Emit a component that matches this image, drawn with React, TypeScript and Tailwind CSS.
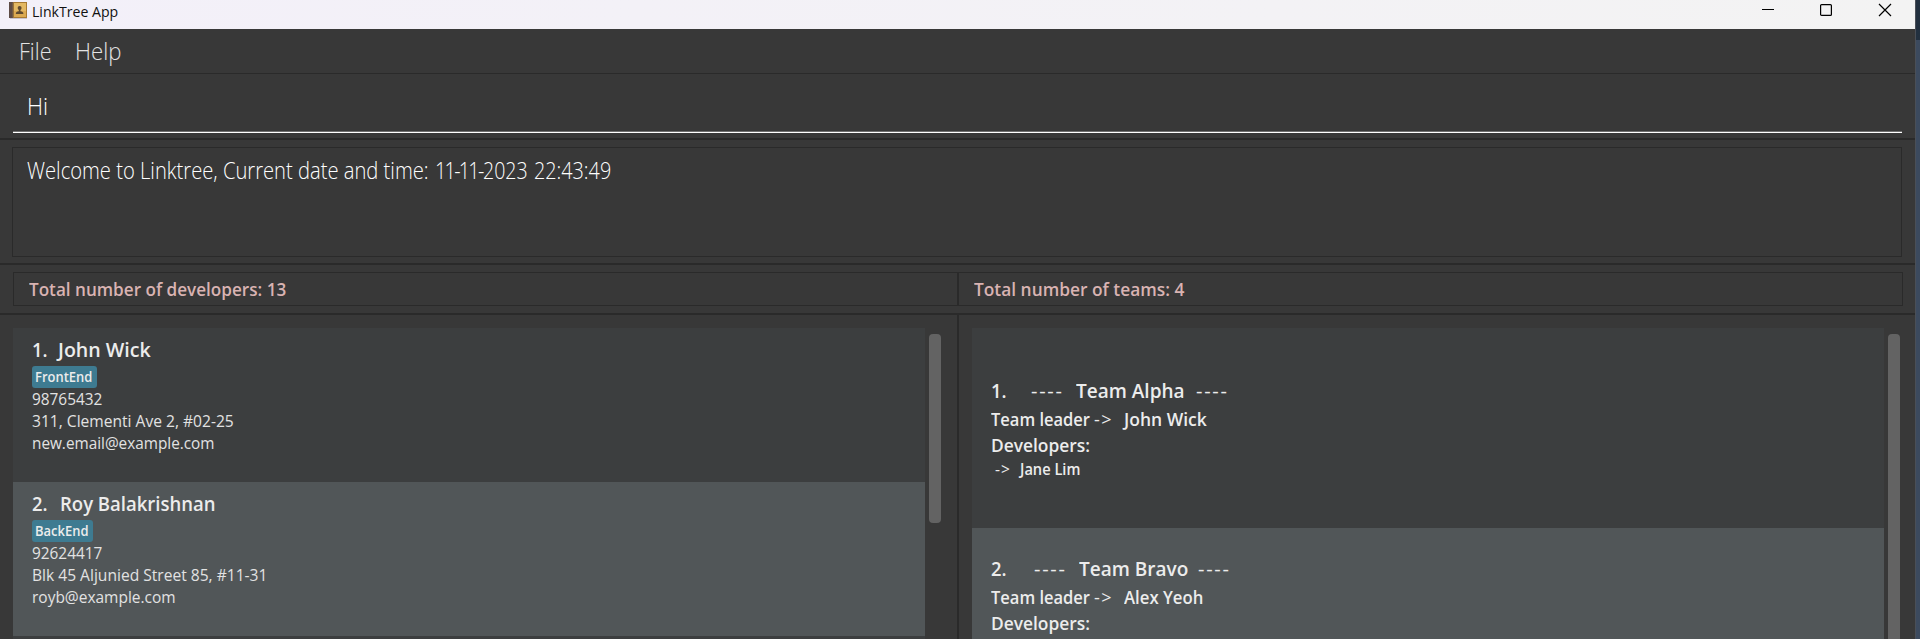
import React from "react";

type TextProps = { className: string; children: React.ReactNode };

function Text({ className, children }: TextProps) {
  return <span className={`block w-max shrink-0 origin-left whitespace-pre ${className}`}>{children}</span>;
}

function AppIcon() {
  return (
    <svg width="18" height="17" viewBox="0 0 18 17">
      <rect x="0" y="0" width="18" height="16" fill="#a87a32" />
      <rect x="0" y="0" width="4" height="16" fill="#5d4b46" />
      <rect x="3.5" y="0.5" width="1" height="15" fill="#8a6a42" />
      <rect x="5" y="1" width="12" height="14" fill="#e3b863" />
      <rect x="5" y="9" width="12" height="6" fill="#dba951" />
      <circle cx="10.6" cy="6" r="2" fill="#5f4a30" />
      <path d="M9.8 7h1.7v2.200c1.900.3 2.900.9 2.900 2.800H6.800c0-1.900 1-2.500 3-2.800z" fill="#5f4a30" />
      <rect x="1" y="16" width="17" height="1" fill="#c9c4cf" />
    </svg>
  );
}

function TitleBar() {
  return (
    <header className="flex h-[29px] bg-linear-to-r from-[#f3f0f9] to-[#f3f3f3] pl-[9px]">
      <div className="pt-[2px]">
        <AppIcon />
      </div>
      <Text className="ml-[5px] h-[22px] scale-x-[.94] text-[15px] leading-[22px] text-[#111111]">LinkTree App</Text>
      <div className="ml-auto flex pr-[23px] pt-[3px] text-black">
        <svg width="14" height="14" viewBox="0 0 14 14" className="mr-[44px]">
          <path d="M1 6.500h12" stroke="currentColor" />
        </svg>
        <svg width="14" height="14" viewBox="0 0 14 14" fill="none" className="mr-[45px]">
          <rect x="1.600" y="1.600" width="10.800" height="10.800" rx="1" stroke="currentColor" strokeWidth="1.200" />
        </svg>
        <svg width="14" height="14" viewBox="0 0 14 14">
          <path d="M1 1l12 12M13 1L1 13" stroke="currentColor" strokeWidth="1.200" />
        </svg>
      </div>
    </header>
  );
}

type Developer = {
  index: string;
  name: string;
  nameScale: string;
  tag: string;
  tagBox: string;
  phone: string;
  address: string;
  email: string;
  emailScale: string;
  row: string;
  gap: string;
};

const developers: Developer[] = [
  {
    index: "1.",
    name: "John Wick",
    nameScale: "scale-x-[.98]",
    tag: "FrontEnd",
    tagBox: "w-[65px]",
    phone: "98765432",
    address: "311, Clementi Ave 2, #02-25",
    email: "new.email@example.com",
    emailScale: "scale-x-[.957]",
    row: "bg-[#3c3e3f]",
    gap: "w-[26px]",
  },
  {
    index: "2.",
    name: "Roy Balakrishnan",
    nameScale: "scale-x-[.926]",
    tag: "BackEnd",
    tagBox: "w-[61px]",
    phone: "92624417",
    address: "Blk 45 Aljunied Street 85, #11-31",
    email: "royb@example.com",
    emailScale: "scale-x-[.967]",
    row: "bg-[#515658]",
    gap: "w-[28px]",
  },
];

function DeveloperCell({ dev }: { dev: Developer }) {
  return (
    <li className={`h-[154px] shrink-0 pl-[19px] pt-[7px] text-[16px] leading-[22px] text-[#e2e2e2] ${dev.row}`}>
      <div className="flex h-[29px] text-[20px] font-semibold leading-[30px] text-[#ececec]">
        <div className={dev.gap}>
          <Text className="scale-x-[.92]">{dev.index}</Text>
        </div>
        <Text className={dev.nameScale}>{dev.name}</Text>
      </div>
      <div className={`mt-[2px] h-[22px] rounded-[3px] bg-[#3e7b91] pl-[3px] text-[14px] font-semibold leading-[22px] text-[#ececec] ${dev.tagBox}`}>
        <Text className="scale-x-[.926]">{dev.tag}</Text>
      </div>
      <Text className="scale-x-[.96]">{dev.phone}</Text>
      <Text className="scale-x-[.974]">{dev.address}</Text>
      <Text className={dev.emailScale}>{dev.email}</Text>
    </li>
  );
}

type Team = {
  index: string;
  name: string;
  leader: string;
  leaderScale: string;
  members: string[];
  row: string;
  lead: string;
  nameBox: string;
};

const teams: Team[] = [
  {
    index: "1.",
    name: "Team Alpha",
    leader: "John Wick",
    leaderScale: "scale-x-[.972]",
    members: ["Jane Lim"],
    row: "h-[200px] bg-[#3c3e3f] pt-[49px]",
    lead: "w-[40px]",
    nameBox: "w-[120px]",
  },
  {
    index: "2.",
    name: "Team Bravo",
    leader: "Alex Yeoh",
    leaderScale: "scale-x-[.93]",
    members: [],
    row: "h-[200px] bg-[#515658] pt-[27px]",
    lead: "w-[43px]",
    nameBox: "w-[119px]",
  },
];

function TeamCell({ team }: { team: Team }) {
  return (
    <li className={`shrink-0 pl-[19px] text-[18px] font-semibold leading-[26px] text-[#ececec] ${team.row}`}>
      <div className="flex h-[28px] text-[20px] leading-[28px]">
        <div className={team.lead}>
          <Text className="scale-x-[.92]">{team.index}</Text>
        </div>
        <div className="w-[45px]">
          <Text className="font-normal tracking-[1.700px]">----</Text>
        </div>
        <div className={team.nameBox}>
          <Text className="scale-x-[.95]">{team.name}</Text>
        </div>
        <Text className="font-normal tracking-[1.700px]">----</Text>
      </div>
      <div className="mt-px flex h-[26px]">
        <div className="w-[103px]">
          <Text className="scale-x-[.916]">Team leader</Text>
        </div>
        <div className="w-[30px]">
          <Text className="font-normal tracking-[1.500px]">{"->"}</Text>
        </div>
        <Text className={team.leaderScale}>{team.leader}</Text>
      </div>
      <Text className="scale-x-[.965]">Developers:</Text>
      {team.members.map((m) => (
        <div key={m} className="flex h-[22px] pl-[4px] text-[15.5px] leading-[23px]">
          <div className="w-[25px]">
            <Text className="font-normal tracking-[1px]">{"->"}</Text>
          </div>
          <Text className="scale-x-[.944]">{m}</Text>
        </div>
      ))}
    </li>
  );
}

export default function App() {
  return (
    <div className="flex h-[639px] w-[1920px] overflow-hidden bg-[#383838] font-['Open_Sans','Noto_Sans',sans-serif]">
      <div className="flex w-[1915px] flex-col">
        <TitleBar />
        <nav className="flex h-[45px] border-b border-[#2a2a2a] pl-[18.500px] text-[23px] font-light leading-[44px] text-[#e4e4e4]">
          <div className="w-[56px]">
            <Text className="scale-x-[.94]">File</Text>
          </div>
          <Text className="scale-x-[.965]">Help</Text>
        </nav>

        <section className="h-[64px] pl-[13px] pr-[13px] pt-[11px]">
          <div className="h-[47px] border-b border-[#707070] pl-[13.500px] text-[23px] font-light leading-[43px] text-white">
            <Text className="scale-x-[.97]">Hi</Text>
          </div>
          <div className="h-px bg-white" />
        </section>

        <section className="h-[125px] border-t-2 border-[#2a2a2a] px-[12px] pt-[7px]">
          <div className="flex h-[110px] w-[1890px] border border-[#2a2a2a] pl-[14px] pt-[2px] text-[23px] font-light leading-[40px] text-white">
            <div className="w-[408px]">
              <Text className="scale-x-[.877]">Welcome to Linktree, Current date and time: </Text>
            </div>
            <div className="w-[48px]">
              <Text className="scale-x-[.86] tracking-[-2px]">11-11-</Text>
            </div>
            <div className="w-[51px]">
              <Text className="scale-x-[.85]">2023 </Text>
            </div>
            <Text className="scale-x-[.86]">22:43:49</Text>
          </div>
        </section>

        <section className="h-[50px] border-t-2 border-[#2a2a2a] pl-[13px] pt-[7px]">
          <div className="flex h-[34px] w-[1890px] border border-[#2a2a2a] text-[18px] font-semibold leading-[32px] text-[#d9b3b2]">
            <div className="w-[945px] border-r-2 border-[#2a2a2a] pl-[15px]">
              <Text className="scale-x-[.951]">Total number of developers: 13</Text>
            </div>
            <div className="pl-[15px]">
              <Text className="scale-x-[.963]">Total number of teams: 4</Text>
            </div>
          </div>
        </section>

        <main className="flex min-h-0 flex-1 border-t-2 border-[#2a2a2a]">
          <section className="flex w-[959px] border-r-2 border-[#2a2a2a] pl-[13px] pt-[13px]">
            <ul className="flex w-[912px] flex-col overflow-hidden">
              {developers.map((d) => (
                <DeveloperCell key={d.name} dev={d} />
              ))}
              <li className="h-[154px] shrink-0 bg-[#3c3e3f]" />
            </ul>
            <div className="ml-[4px] mt-[6px] h-[189px] w-[12px] rounded-[4px] bg-[#636363]" />
          </section>
          <section className="flex flex-1 pl-[13px] pt-[13px]">
            <ul className="flex w-[912px] flex-col overflow-hidden">
              {teams.map((t) => (
                <TeamCell key={t.name} team={t} />
              ))}
            </ul>
            <div className="ml-[4px] mt-[6px] h-[400px] w-[12px] rounded-[4px] bg-[#636363]" />
          </section>
        </main>
      </div>
      <aside className="w-[5px] border-l border-[#4a4f57] bg-[#3c4a5e]">
        <div className="h-[40px] bg-[#22303f]" />
      </aside>
    </div>
  );
}
